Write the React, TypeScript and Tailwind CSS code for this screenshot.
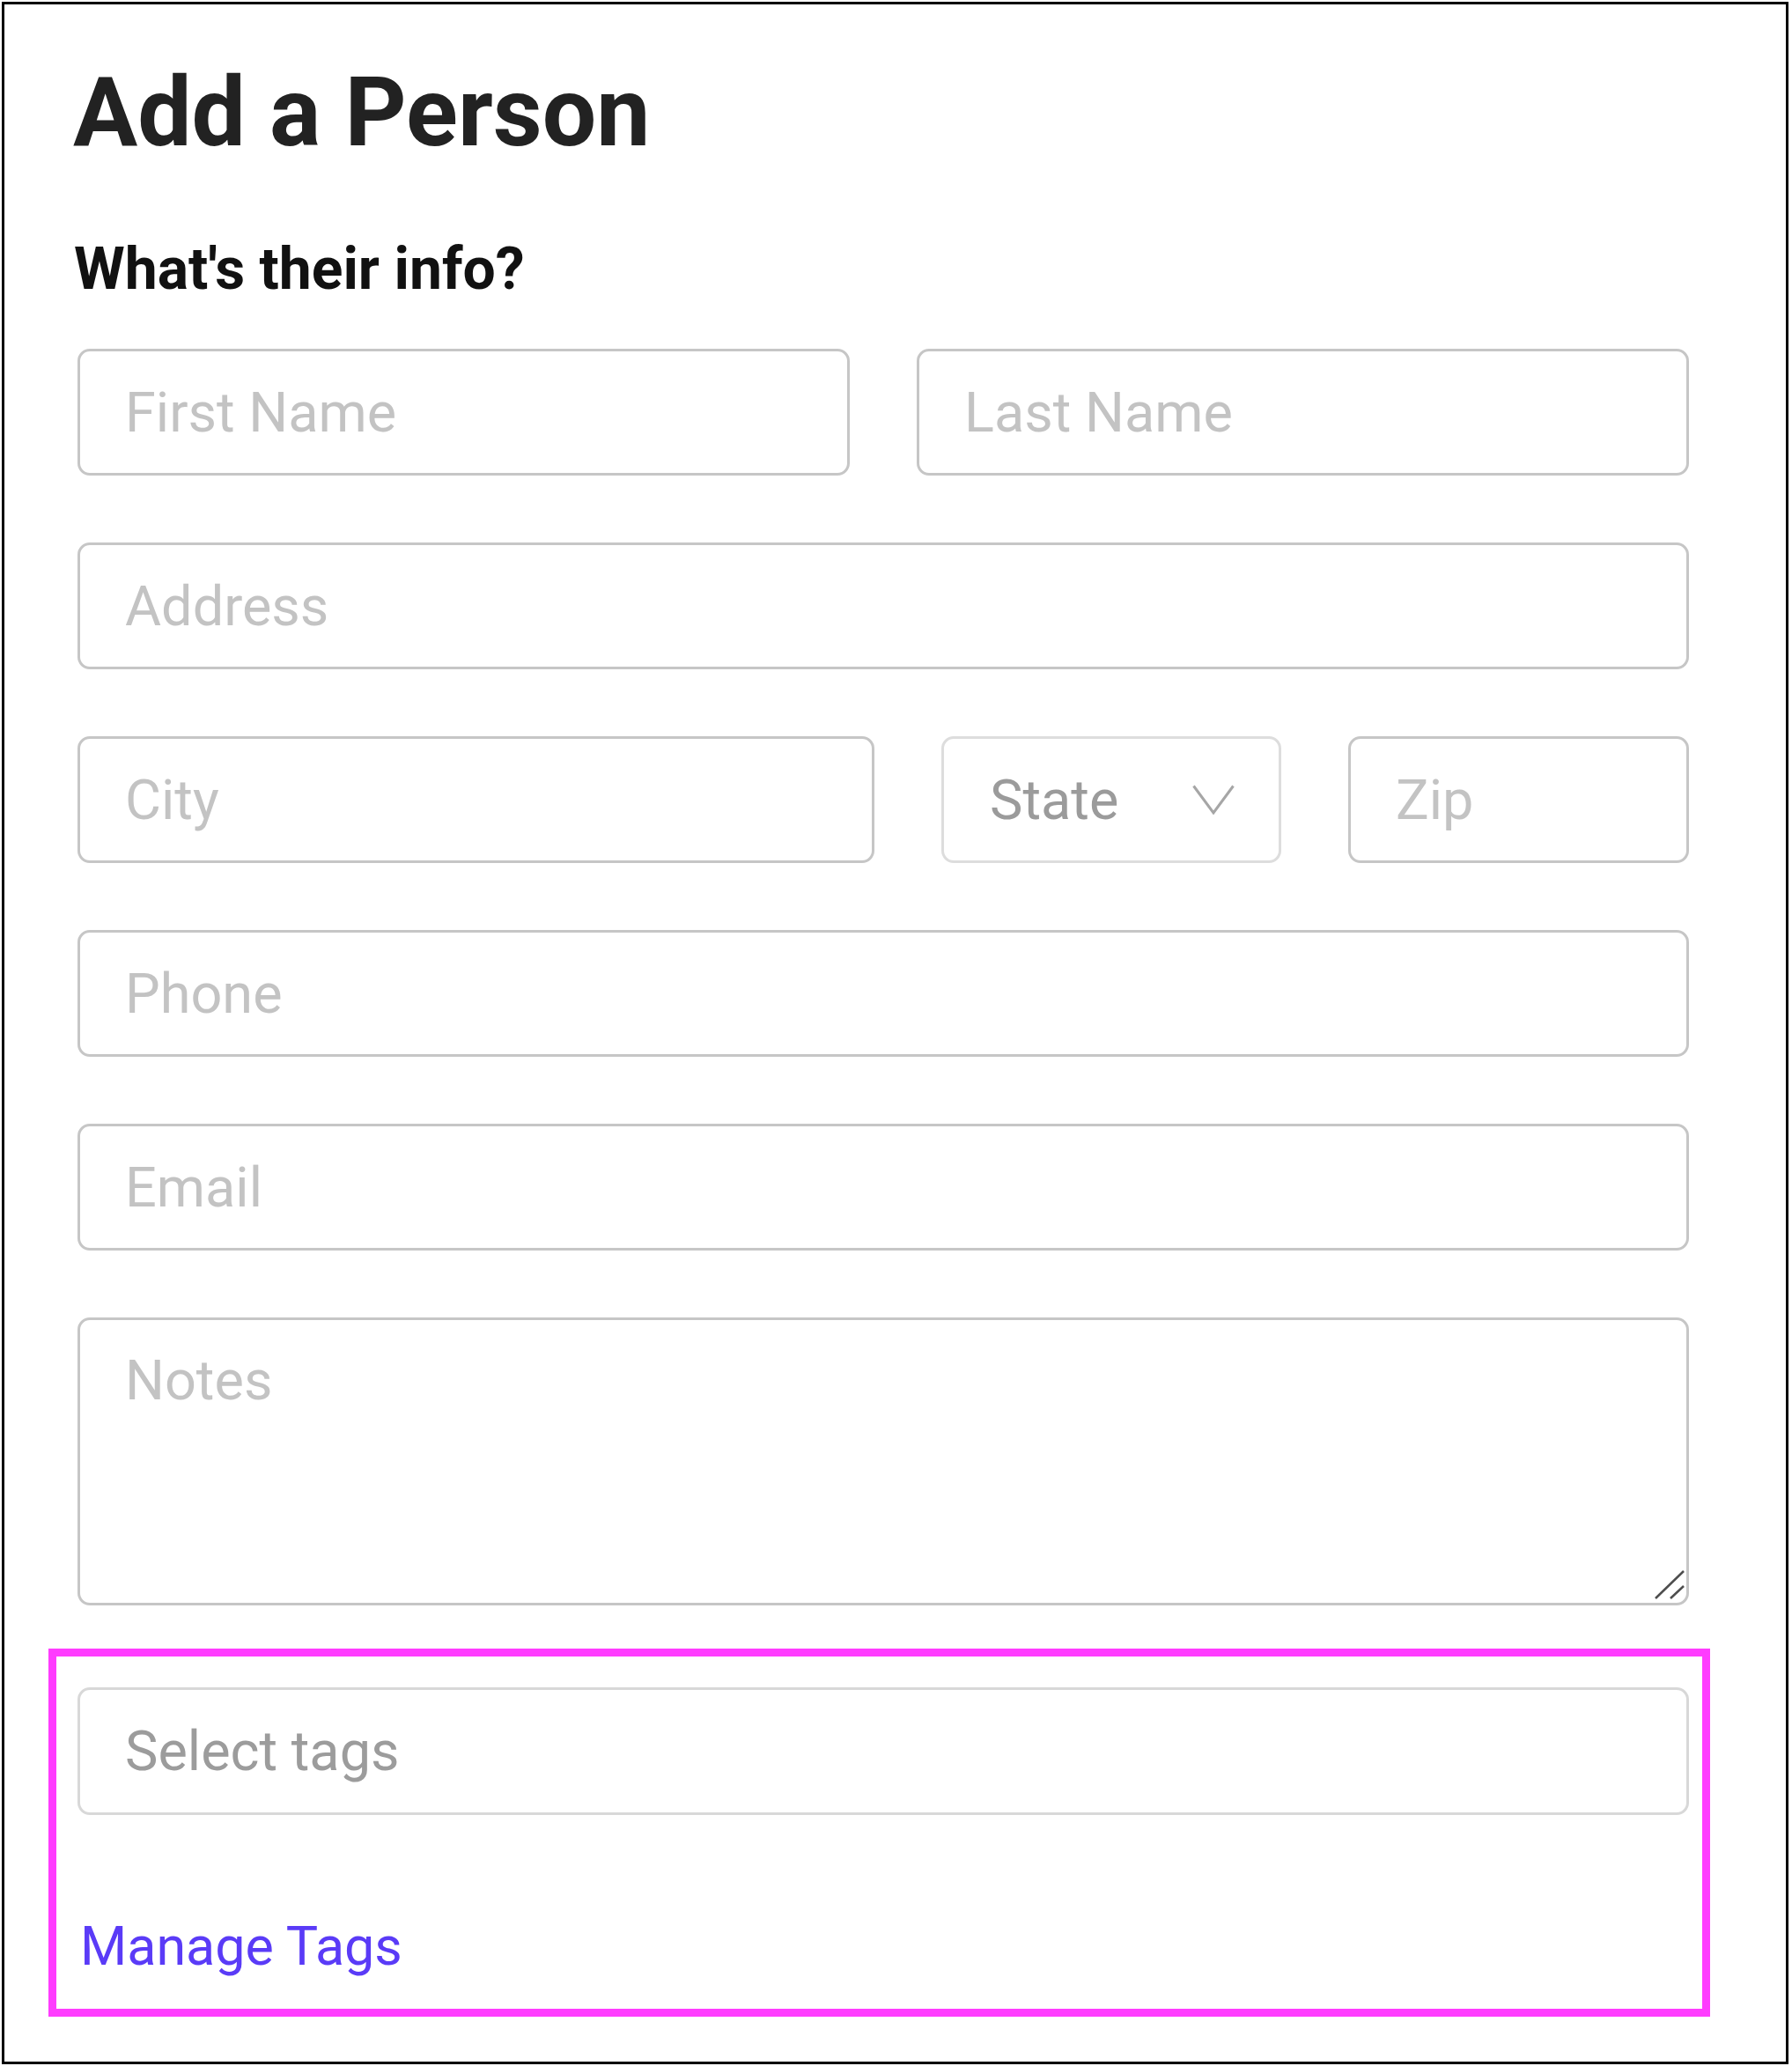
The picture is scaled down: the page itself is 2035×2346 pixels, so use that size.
import React from 'react';

const FONT = "font-['Roboto','Liberation_Sans',sans-serif]";

const inputClass =
    'h-[144px] w-full rounded-[14px] border-[3px] border-[#c6c6c6] bg-white pl-[51px] pr-[20px] text-[63px] leading-none text-[#333] outline-none placeholder:text-[#c3c3c3]';

const Field: React.FC<{ placeholder: string; className?: string }> = ({ placeholder, className }) => (
    <input type="text" placeholder={placeholder} className={`${inputClass} ${className ?? ''}`} />
);

const Chevron: React.FC = () => (
    <svg width="48" height="34" viewBox="0 0 48 34" fill="none">
        <polyline points="1.5,1.5 24,32 46.5,1.5" stroke="#a6a6a6" strokeWidth="3" />
    </svg>
);

const ResizeGrip: React.FC = () => (
    <svg width="36" height="36" viewBox="0 0 36 36" className="pointer-events-none absolute right-[4px] bottom-[6px]">
        <line x1="2" y1="34" x2="34" y2="3" stroke="#4d4d4d" strokeWidth="2.5" />
        <line x1="19" y1="34" x2="34" y2="20" stroke="#4d4d4d" strokeWidth="2.5" />
    </svg>
);

const App: React.FC = () => {
    return (
        <div className={`h-[2346px] w-[2035px] bg-white pt-[2px] pr-[4px] pb-[2px] pl-[2px] ${FONT}`}>
            <div className="flex h-full flex-col border-[3px] border-black pt-[69px] pr-[110px] pl-[83px]">
                <h1 className="-ml-[5px] text-[109px] font-bold leading-none text-[#222]">Add a Person</h1>
                <h2 className="-ml-[4px] mt-[90px] text-[66px] font-bold leading-none text-[#111]">What's their info?</h2>

                <div className="mt-[57px] flex flex-col gap-[76px]">
                    <div className="flex gap-[76px]">
                        <Field placeholder="First Name" />
                        <Field placeholder="Last Name" />
                    </div>

                    <Field placeholder="Address" />

                    <div className="flex gap-[76px]">
                        <Field placeholder="City" className="flex-1" />
                        <div className="flex h-[144px] w-[386px] shrink-0 items-center justify-between rounded-[14px] border-[3px] border-[#dddddd] pl-[52px] pr-[50px]">
                            <span className="text-[63px] leading-none text-[#9b9b9b]">State</span>
                            <Chevron />
                        </div>
                        <Field placeholder="Zip" className="!w-[387px] shrink-0" />
                    </div>

                    <Field placeholder="Phone" />
                    <Field placeholder="Email" />

                    <div className="relative">
                        <textarea
                            placeholder="Notes"
                            className="block h-[327px] w-full resize-none rounded-[14px] border-[3px] border-[#c6c6c6] pt-[37px] pl-[51px] pr-[20px] text-[63px] leading-none outline-none placeholder:text-[#c3c3c3]"
                        />
                        <ResizeGrip />
                    </div>
                </div>

                {/* highlighted tags block */}
                <div className="mt-[49px] -mr-[24px] -ml-[33px] border-[9px] border-[#ff3cff] pt-[35px] pr-[15px] pb-[40px] pl-[24px]">
                    <div className="flex h-[145px] items-center rounded-[14px] border-[3px] border-[#d8d8d8] pl-[51px]">
                        <span className="text-[63px] leading-none text-[#9c9c9c]">Select tags</span>
                    </div>
                    <a className="mt-[119px] block pl-[3px] text-[61px] leading-none text-[#5a3bf7]">Manage Tags</a>
                </div>
            </div>
        </div>
    );
};

export default App;
